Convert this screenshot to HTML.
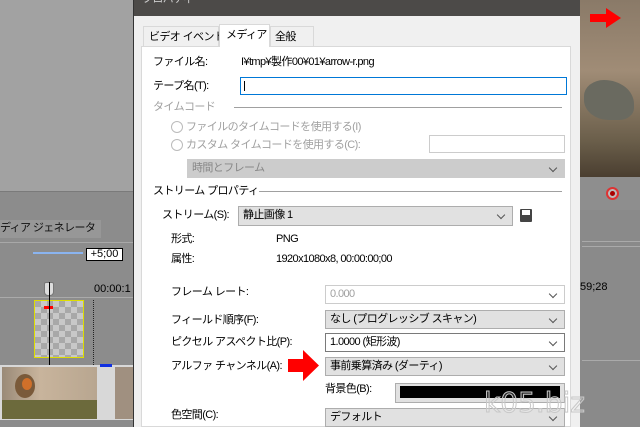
<!DOCTYPE html>
<html><head><meta charset="utf-8"><style>
*{margin:0;padding:0;box-sizing:border-box}
body{width:640px;height:427px;overflow:hidden;position:relative;background:#888;font-family:"Liberation Sans","Noto Sans CJK JP",sans-serif;font-size:11px;letter-spacing:-0.6px;color:#000}
.a{position:absolute}
.t{position:absolute;white-space:nowrap;line-height:14px}
.g{color:#a0a0a0}
.cb{position:absolute;height:19px;border:1px solid #adadad;background:#e1e1e1;padding-left:4px;line-height:17px;white-space:nowrap}
.cb.w{background:#fff;border-color:#7a7a7a}
.cb:after{content:"";position:absolute;right:8px;top:5px;width:5px;height:5px;border-right:1px solid #555;border-bottom:1px solid #555;transform:rotate(45deg)}
</style></head><body>
<div class="a" style="left:0;top:0;width:133px;height:191px;background:#a2a2a2"></div>
<div class="a" style="left:0;top:191px;width:133px;height:1px;background:#7a7a7a"></div>
<div class="a" style="left:0;top:192px;width:133px;height:235px;background:#8c8c8c"></div>
<div class="a" style="left:0;top:220px;width:101px;height:18px;background:#979797"></div>
<div class="t" style="left:0;top:221px;color:#111">ディア ジェネレータ</div>
<div class="a" style="left:0;top:242px;width:133px;height:1px;background:#a8a8a8"></div>
<div class="a" style="left:33px;top:252px;width:50px;height:2px;background:#8ab4f0"></div>
<div class="a" style="left:86px;top:248px;width:37px;height:13px;background:#fff;border:1px solid #000;font-size:11px;line-height:11px;text-align:center;letter-spacing:0">+5;00</div>
<div class="a" style="left:0;top:297px;width:133px;height:1px;background:#aaa"></div>
<div class="t" style="left:94px;top:282px;letter-spacing:0">00:00:1</div>
<div class="a" style="left:44px;top:282px;width:10px;height:14px;background:#ddd;border:1px solid #777;border-radius:2px 2px 4px 4px"></div>
<div class="a" style="left:34px;top:300px;width:50px;height:58px;border:1px solid #dede00;background:repeating-conic-gradient(#c8c8c8 0 25%,#a8a8a8 0 50%) 0 0/12px 12px"></div>
<div class="a" style="left:44px;top:306px;width:9px;height:3px;background:#f00"></div>
<div class="a" style="left:49px;top:282px;width:1px;height:145px;background:#000"></div>
<div class="a" style="left:93px;top:300px;width:1px;height:127px;border-left:1px dotted #222"></div>
<div class="a" style="left:0;top:365px;width:133px;height:55px;background:#d8d8d8"></div>
<div class="a" style="left:2px;top:367px;width:95px;height:52px;background:linear-gradient(90deg,#9a8a78,#c8b49c 40%,#b8a690);"></div>
<div class="a" style="left:2px;top:400px;width:95px;height:19px;background:#6c6a3c"></div>
<div class="a" style="left:15px;top:374px;width:20px;height:24px;border-radius:50%;background:#7a5a3a"></div>
<div class="a" style="left:22px;top:378px;width:10px;height:12px;border-radius:50%;background:#d0702a"></div>
<div class="a" style="left:115px;top:367px;width:18px;height:52px;background:#a09080"></div>
<div class="a" style="left:100px;top:364px;width:12px;height:3px;background:#1030e0"></div>
<div class="a" style="left:0;top:420px;width:133px;height:7px;background:#8c8c8c"></div>
<div class="a" style="left:133px;top:0;width:1px;height:427px;background:#333"></div>

<div class="a" style="left:134px;top:0;width:446px;height:16px;background:#4c4a48"></div>
<div class="t" style="left:142px;top:-8px;color:#ccc">プロパティ</div>
<div class="a" style="left:134px;top:16px;width:446px;height:411px;background:#f0f0f0"></div>
<div class="a" style="left:141px;top:46px;width:430px;height:381px;background:#fff;border:1px solid #d9d9d9"></div>
<div class="a" style="left:143px;top:26px;width:76px;height:21px;background:#f0f0f0;border:1px solid #d9d9d9"></div>
<div class="t" style="left:149px;top:30px">ビデオ イベント</div>
<div class="a" style="left:219px;top:24px;width:51px;height:23px;background:#fff;border:1px solid #d9d9d9;border-bottom:none"></div>
<div class="t" style="left:226px;top:28px">メディア</div>
<div class="a" style="left:270px;top:26px;width:44px;height:21px;background:#f0f0f0;border:1px solid #d9d9d9"></div>
<div class="t" style="left:275px;top:30px">全般</div>

<div class="t" style="left:153px;top:55px">ファイル名:</div>
<div class="t" style="left:241px;top:55px">I¥tmp¥製作00¥01¥arrow-r.png</div>
<div class="t" style="left:153px;top:79px">テープ名(T):</div>
<div class="a" style="left:240px;top:77px;width:327px;height:18px;border:1px solid #0078d7;background:#fff"></div>
<div class="a" style="left:244px;top:81px;width:1px;height:10px;background:#000"></div>
<div class="t g" style="left:153px;top:100px">タイムコード</div>
<div class="a" style="left:234px;top:107px;width:328px;height:1px;background:#a0a0a0"></div>
<div class="a" style="left:171px;top:121px;width:12px;height:12px;border:1px solid #bbb;border-radius:50%"></div>
<div class="t g" style="left:186px;top:120px">ファイルのタイムコードを使用する(I)</div>
<div class="a" style="left:171px;top:139px;width:12px;height:12px;border:1px solid #bbb;border-radius:50%"></div>
<div class="t g" style="left:186px;top:138px">カスタム タイムコードを使用する(C):</div>
<div class="a" style="left:429px;top:135px;width:136px;height:18px;border:1px solid #ccc"></div>
<div class="cb" style="left:187px;top:159px;width:378px;background:#ccc;border-color:#ccc;color:#888">時間とフレーム</div>
<div class="t" style="left:153px;top:184px">ストリーム プロパティ</div>
<div class="a" style="left:259px;top:191px;width:303px;height:1px;background:#a0a0a0"></div>
<div class="t" style="left:162px;top:208px">ストリーム(S):</div>
<div class="cb" style="left:238px;top:206px;width:275px;height:20px">静止画像 1</div>
<div class="a" style="left:520px;top:209px;width:12px;height:13px;background:#444;border-radius:1px"></div>
<div class="a" style="left:522px;top:210px;width:8px;height:5px;background:#fff"></div>
<div class="t" style="left:171px;top:232px">形式:</div>
<div class="t" style="left:276px;top:232px">PNG</div>
<div class="t" style="left:171px;top:252px">属性:</div>
<div class="t" style="left:276px;top:252px">1920x1080x8, 00:00:00;00</div>
<div class="t" style="left:171px;top:285px">フレーム レート:</div>
<div class="cb w g" style="left:325px;top:285px;width:240px;border-color:#ccc">0.000</div>
<div class="t" style="left:171px;top:313px">フィールド順序(F):</div>
<div class="cb" style="left:325px;top:310px;width:240px">なし (プログレッシブ スキャン)</div>
<div class="t" style="left:171px;top:335px">ピクセル アスペクト比(P):</div>
<div class="cb w" style="left:325px;top:333px;width:240px">1.0000 (矩形波)</div>
<div class="t" style="left:171px;top:359px">アルファ チャンネル(A):</div>
<div class="cb" style="left:325px;top:357px;width:240px">事前乗算済み (ダーティ)</div>
<svg class="a" style="left:288px;top:350px" width="31" height="31"><polygon points="0,9 15,9 15,0 31,15.5 15,31 15,22 0,22" fill="#f00"/></svg>
<div class="t" style="left:325px;top:382px">背景色(B):</div>
<div class="a" style="left:395px;top:383px;width:170px;height:20px;background:#e1e1e1;border:1px solid #adadad"></div>
<div class="a" style="left:400px;top:386px;width:160px;height:12px;background:#000"></div>
<div class="t" style="left:171px;top:408px">色空間(C):</div>
<div class="cb" style="left:325px;top:408px;width:240px">デフォルト</div>
<div class="a" style="left:575px;top:16px;width:5px;height:411px;background:#f0f0f0"></div>

<div class="a" style="left:580px;top:0;width:60px;height:177px;background:linear-gradient(180deg,#8a7a68,#a08c76 40%,#6a5e4a 80%,#4a3e30)"></div>
<div class="a" style="left:584px;top:80px;width:50px;height:40px;border-radius:40% 60% 30% 50%;background:#6a6a60"></div>
<svg class="a" style="left:590px;top:8px" width="31" height="20"><polygon points="0,6 16,6 16,0 31,10 16,20 16,14 0,14" fill="#f00"/></svg>
<div class="a" style="left:580px;top:177px;width:60px;height:33px;background:#8e8e8e"></div>
<div class="a" style="left:606px;top:187px;width:13px;height:13px;border:2px solid #d33;border-radius:50%;background:#bbb"></div>
<div class="a" style="left:610px;top:191px;width:5px;height:5px;background:#a00;border-radius:50%"></div>
<div class="a" style="left:580px;top:210px;width:60px;height:217px;background:#8a8a8a"></div>
<div class="a" style="left:582px;top:241px;width:58px;height:1px;background:#aaa"></div>
<div class="a" style="left:582px;top:246px;width:58px;height:1px;background:#aaa"></div>
<div class="t" style="left:580px;top:280px;letter-spacing:0">59;28</div>
<div class="a" style="left:582px;top:360px;width:58px;height:1px;background:#aaa"></div>
<div class="t" style="left:484px;top:386px;font-size:28px;line-height:34px;letter-spacing:0;color:rgba(255,255,255,0.15);-webkit-text-stroke:1px #c8c8c8;font-family:'DejaVu Sans',sans-serif">k05.biz</div>
</body></html>
